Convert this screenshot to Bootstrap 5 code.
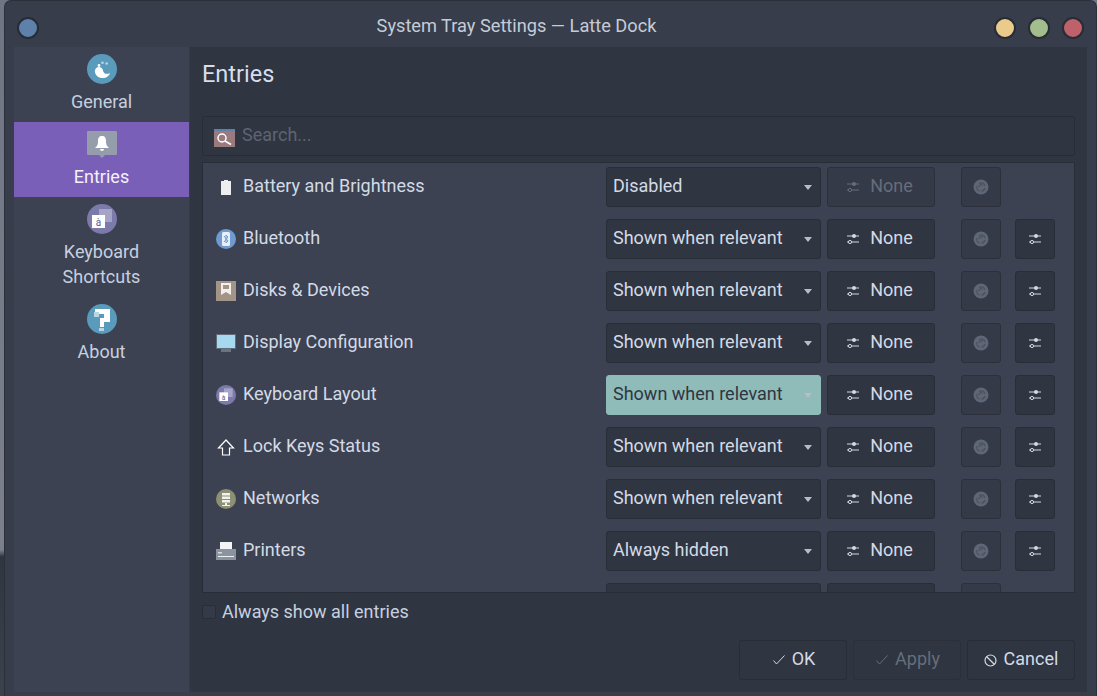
<!DOCTYPE html>
<html lang="en">
<head>
    <meta charset="UTF-8">
    <title>System Tray Settings — Latte Dock</title>
    <link href="https://cdn.jsdelivr.net/npm/bootstrap@5.3.0/dist/css/bootstrap.min.css" rel="stylesheet">
    <style>
        html, body { height: 100%; }
        body {
            margin: 0;
            overflow: hidden;
            font-family: Roboto, "Liberation Sans", sans-serif;
            font-size: 18px;
            color: #d3dae6;
            background: linear-gradient(#6f7583 0, #7b808c 79%, #30363f 80%, #3c424c 100%);
            padding: 1px 1px 0 5px;
        }
        .tray-window {
            height: 695px;
            background: #373d4a;
            border-radius: 6px 6px 0 0;
            box-shadow: 0 0 0 1px #2b303a;
        }
        .title-bar { height: 46px; padding: 4px 12px 0 12px; }
        .title-text { font-size: 18.2px; color: #c5ccd8; }
        .win-dot {
            width: 22px;
            height: 22px;
            margin-top: 4px;
            border-radius: 50%;
            border: 2px solid #272c36;
        }
        .win-dots { gap: 12px; }
        .dot-blue { background: #5e81ac; }
        .dot-yellow { background: #ebcb8b; }
        .dot-green { background: #a3be8c; }
        .dot-red { background: #bf616a; }
        .window-body { margin: 0 9px; height: 645px; background: #2f3541; }
        .side-pane { width: 176px; background: #3c4251; border-right: 1px solid #353b48; }
        .side-item { height: 75px; line-height: 25px; padding-top: 5px; color: #c6d0e0; }
        .side-item.is-tall { height: 100px; }
        .side-item.is-active { background: #7a5fb8; color: #f4f1fb; }
        .side-item svg { display: block; margin: 2px auto 5px; }
        .main-pane { padding: 0 12px; min-width: 0; }
        .pane-title { height: 69px; margin: 0; padding: 12px 0 0; font-size: 23.5px; font-weight: 400; line-height: 30px; color: #d8dee9; }
        .search-box { height: 40px; border: 1px solid #282d37; border-radius: 3px; background: #2f3541; padding-left: 11px; gap: 7px; color: #5d6472; }
        .search-box svg { margin-top: 3px; }
        .search-hint { font-size: 18px; padding-bottom: 4px; }
        .entry-list { height: 431px; margin-top: 6px; overflow: hidden; background: #3c4251; border: 1px solid #282d37; padding-top: 4px; }
        .entry-row { height: 52px; padding-bottom: 12px; flex: none; }
        .entry-name { width: 403px; padding-left: 13px; gap: 7px; }
        .entry-name svg { flex: none; }
        .entry-label { padding-bottom: 4px; }
        .tray-select.form-select {
            width: 215px;
            height: 40px;
            padding: 0 0 4px 6px;
            font-size: 18px;
            border: 1px solid #282d37;
            border-radius: 3px;
            color: #d3dae6;
            background-color: #2f3541;
            background-image: none;
        }
        .tray-select-wrap { position: relative; }
        .tray-select-wrap::after {
            content: "";
            position: absolute;
            right: 9px;
            top: 18px;
            border-left: 4px solid transparent;
            border-right: 4px solid transparent;
            border-top: 5px solid #b9bdc4;
            pointer-events: none;
        }
        .tray-select.is-hover.form-select { background-color: #8fbcb8; border-color: #8fbcb8; color: #2f3541; }
        .tray-btn.btn {
            height: 40px;
            padding: 0 0 4px;
            font-size: 18px;
            border: 1px solid #282d37;
            border-radius: 3px;
            color: #d3dae6;
            background: #2f3541;
            gap: 11px;
        }
        .tray-btn svg { margin-top: 4px; }
        .tray-btn.btn:disabled { color: #666d7b; background: #343a47; border-color: #2b303a; opacity: 1; }
        .tray-btn.key-btn.btn { width: 108px; margin-left: 6px; padding-right: 2px; }
        .dim-btn { width: 40px; margin-left: 26px; }
        .cfg-btn { width: 40px; margin-left: 14px; }
        .show-all { height: 38px; gap: 6px; color: #c6d0e0; }
        .show-all span:last-child { padding-bottom: 2px; }
        .fake-check { width: 14px; height: 14px; border: 1px solid #282d37; border-radius: 2px; background: #343a47; }
        .foot-row { margin-top: 9px; gap: 6px; }
        .foot-row .tray-btn.btn { width: 108px; background: #2f3541; gap: 7px; }
        .foot-row .tray-btn.btn:not(:last-child) { padding-left: 2px; }
        .foot-row .tray-btn.btn:disabled { background: #2f3541; }
    </style>
</head>
<body>

<svg class="d-none">
    <symbol id="sliders" viewBox="0 0 12 10">
        <path d="M0 2h12M0 8h12" stroke="currentColor" fill="none"/>
        <circle cx="7" cy="2" r="2" fill="currentColor"/>
        <circle cx="3" cy="8" r="1.6" fill="#2f3541" stroke="currentColor"/>
    </symbol>
    <symbol id="swirl" viewBox="0 0 16 16">
        <circle cx="8" cy="8" r="7.5" fill="#5f6776"/>
        <path d="M6 4.500a4 4 0 0 1 6 2.500M4 7a4 4 0 0 0 2.500 5M12 9a4 4 0 0 1-3.500 3M6 8a2 2 0 0 1 3.500-1.500" fill="none" stroke="#4b5260" stroke-width="1.300"/>
    </symbol>
    <symbol id="kbd" viewBox="0 0 30 30">
        <circle cx="15" cy="15" r="15" fill="#7c79ab"/>
        <rect x="12" y="5" width="13" height="13" fill="#a5a3c6"/>
        <rect x="5" y="11" width="13" height="13" fill="#fff"/>
        <text x="11.500" y="22" font-size="10" text-anchor="middle" font-family="Roboto, sans-serif" fill="#5f5c8c">à</text>
    </symbol>
</svg>

<div class="tray-window d-flex flex-column">
    <div class="title-bar d-flex align-items-center">
        <span class="win-dot dot-blue"></span>
        <div class="title-text flex-grow-1 text-center">System Tray Settings — Latte Dock</div>
        <div class="win-dots d-flex">
            <span class="win-dot dot-yellow"></span>
            <span class="win-dot dot-green"></span>
            <span class="win-dot dot-red"></span>
        </div>
    </div>

    <div class="window-body d-flex">
        <div class="side-pane flex-shrink-0 text-center">
            <div class="side-item">
                <svg width="30" height="30" viewBox="0 0 30 30">
                    <circle cx="15" cy="15" r="15" fill="#5a9abb"/>
                    <path d="M12 13C8.500 13 7.500 16.500 8 18.500 9 22.500 13 24.500 17 24 20 23.600 22.500 21.500 23 19 20.500 20.500 17.500 20 16.500 18 16 16.500 16 13.500 12 13z" fill="#fff"/>
                    <circle cx="12" cy="11.500" r="1.400" fill="#fff"/>
                    <circle cx="15.500" cy="8.700" r="1.300" fill="#b9d6e5"/>
                    <circle cx="19.700" cy="9.500" r="1.300" fill="#b9d6e5"/>
                </svg>
                General
            </div>
            <div class="side-item is-active">
                <svg width="30" height="30" viewBox="0 0 30 30">
                    <path d="M1 2h28a1 1 0 0 1 1 1v22a1 1 0 0 1-1 1h-11l-3 3-3-3H1a1 1 0 0 1-1-1V3a1 1 0 0 1 1-1z" fill="#959cab"/>
                    <path d="M15 7c-3 0-4 2-4 5 0 4-1 5-3 7h14c-2-2-3-3-3-7 0-3-1-5-4-5z M13 20h4a2 2 0 0 1-4 0z" fill="#fff"/>
                </svg>
                Entries
            </div>
            <div class="side-item is-tall">
                <svg width="30" height="30"><use href="#kbd"/></svg>
                Keyboard<br>Shortcuts
            </div>
            <div class="side-item">
                <svg width="30" height="30" viewBox="0 0 30 30">
                    <circle cx="15" cy="15" r="15" fill="#5a9abb"/>
                    <path d="M8 5h15v13h-6v5h-4v-9h4V10H8z" fill="#fff"/>
                    <rect x="7" y="8" width="5" height="5" fill="#b9d6e5"/>
                    <rect x="12" y="24" width="5" height="3" fill="#b9d6e5"/>
                </svg>
                About
            </div>
        </div>

        <div class="main-pane flex-grow-1">
            <h1 class="pane-title">Entries</h1>
            <div class="search-box d-flex align-items-center">
                <svg width="21" height="18" viewBox="0 0 21 18">
                    <rect y="1" width="21" height="17" fill="#9a7a7c"/>
                    <rect y="0" width="21" height="2" fill="#5e81ac"/>
                    <circle cx="8" cy="9" r="4" fill="#9a7a7c" stroke="#fff" stroke-width="1.500"/>
                    <path d="M11 12l6 3.500" stroke="#fff" stroke-width="1.500"/>
                </svg>
                <span class="search-hint">Search...</span>
            </div>

            <div class="entry-list d-flex flex-column">
                <div class="entry-row d-flex align-items-start">
                    <div class="entry-name d-flex align-items-center">
                        <svg width="20" height="40" viewBox="0 0 20 40"><path d="M5 14h3v-1h4v1h3v14H5z" fill="#eceef0"/></svg>
                        <span class="entry-label">Battery and Brightness</span>
                    </div>
                    <div class="tray-select-wrap"><select class="form-select tray-select"><option>Disabled</option></select></div>
                    <button class="btn tray-btn key-btn d-flex align-items-center justify-content-center" disabled><svg width="12" height="10"><use href="#sliders"/></svg>None</button>
                    <button class="btn tray-btn dim-btn d-flex align-items-center justify-content-center" disabled><svg width="16" height="16"><use href="#swirl"/></svg></button>
                </div>
                <div class="entry-row d-flex align-items-start">
                    <div class="entry-name d-flex align-items-center">
                        <svg width="20" height="40" viewBox="0 0 20 40"><circle cx="10" cy="20" r="10" fill="#6f9bd1"/><rect x="6" y="13" width="8" height="14" rx="1.500" fill="#e8eff8"/><path d="M8 17l4 5-2 2v-8l2 2-4 5" fill="none" stroke="#6f9bd1"/></svg>
                        <span class="entry-label">Bluetooth</span>
                    </div>
                    <div class="tray-select-wrap"><select class="form-select tray-select"><option>Shown when relevant</option></select></div>
                    <button class="btn tray-btn key-btn d-flex align-items-center justify-content-center"><svg width="12" height="10"><use href="#sliders"/></svg>None</button>
                    <button class="btn tray-btn dim-btn d-flex align-items-center justify-content-center" disabled><svg width="16" height="16"><use href="#swirl"/></svg></button>
                    <button class="btn tray-btn cfg-btn d-flex align-items-center justify-content-center"><svg width="12" height="10"><use href="#sliders"/></svg></button>
                </div>
                <div class="entry-row d-flex align-items-start">
                    <div class="entry-name d-flex align-items-center">
                        <svg width="20" height="40" viewBox="0 0 20 40"><rect y="10" width="20" height="20" fill="#a39488"/><path d="M5 12h10v12l-5-3-5 3z" fill="#f2efec"/><rect x="7" y="14" width="6" height="4" fill="#a39488"/></svg>
                        <span class="entry-label">Disks &amp; Devices</span>
                    </div>
                    <div class="tray-select-wrap"><select class="form-select tray-select"><option>Shown when relevant</option></select></div>
                    <button class="btn tray-btn key-btn d-flex align-items-center justify-content-center"><svg width="12" height="10"><use href="#sliders"/></svg>None</button>
                    <button class="btn tray-btn dim-btn d-flex align-items-center justify-content-center" disabled><svg width="16" height="16"><use href="#swirl"/></svg></button>
                    <button class="btn tray-btn cfg-btn d-flex align-items-center justify-content-center"><svg width="12" height="10"><use href="#sliders"/></svg></button>
                </div>
                <div class="entry-row d-flex align-items-start">
                    <div class="entry-name d-flex align-items-center">
                        <svg width="20" height="40" viewBox="0 0 20 40"><rect y="11" width="20" height="15" fill="#5f6b78"/><rect x="1" y="12" width="18" height="13" fill="#a6d8f0"/><rect x="5" y="26" width="10" height="3" fill="#6b7280"/></svg>
                        <span class="entry-label">Display Configuration</span>
                    </div>
                    <div class="tray-select-wrap"><select class="form-select tray-select"><option>Shown when relevant</option></select></div>
                    <button class="btn tray-btn key-btn d-flex align-items-center justify-content-center"><svg width="12" height="10"><use href="#sliders"/></svg>None</button>
                    <button class="btn tray-btn dim-btn d-flex align-items-center justify-content-center" disabled><svg width="16" height="16"><use href="#swirl"/></svg></button>
                    <button class="btn tray-btn cfg-btn d-flex align-items-center justify-content-center"><svg width="12" height="10"><use href="#sliders"/></svg></button>
                </div>
                <div class="entry-row d-flex align-items-start">
                    <div class="entry-name d-flex align-items-center">
                        <svg width="20" height="40" viewBox="0 -15 30 60"><use href="#kbd" width="30" height="30"/></svg>
                        <span class="entry-label">Keyboard Layout</span>
                    </div>
                    <div class="tray-select-wrap"><select class="form-select tray-select is-hover"><option>Shown when relevant</option></select></div>
                    <button class="btn tray-btn key-btn d-flex align-items-center justify-content-center"><svg width="12" height="10"><use href="#sliders"/></svg>None</button>
                    <button class="btn tray-btn dim-btn d-flex align-items-center justify-content-center" disabled><svg width="16" height="16"><use href="#swirl"/></svg></button>
                    <button class="btn tray-btn cfg-btn d-flex align-items-center justify-content-center"><svg width="12" height="10"><use href="#sliders"/></svg></button>
                </div>
                <div class="entry-row d-flex align-items-start">
                    <div class="entry-name d-flex align-items-center">
                        <svg width="20" height="40" viewBox="0 0 20 40"><path d="M10 13l7.500 8H13.500v7h-7v-7H2.500z" fill="none" stroke="#fff" stroke-width="1.200"/></svg>
                        <span class="entry-label">Lock Keys Status</span>
                    </div>
                    <div class="tray-select-wrap"><select class="form-select tray-select"><option>Shown when relevant</option></select></div>
                    <button class="btn tray-btn key-btn d-flex align-items-center justify-content-center"><svg width="12" height="10"><use href="#sliders"/></svg>None</button>
                    <button class="btn tray-btn dim-btn d-flex align-items-center justify-content-center" disabled><svg width="16" height="16"><use href="#swirl"/></svg></button>
                    <button class="btn tray-btn cfg-btn d-flex align-items-center justify-content-center"><svg width="12" height="10"><use href="#sliders"/></svg></button>
                </div>
                <div class="entry-row d-flex align-items-start">
                    <div class="entry-name d-flex align-items-center">
                        <svg width="20" height="40" viewBox="0 0 20 40"><circle cx="10" cy="20" r="10" fill="#8c9074"/><path d="M6 14h8v2.500H6zM6 17.500h8V20H6zM6 21h8v2.500H6zM9 24h2v2h3v1H6v-1h3z" fill="#f2f2ec"/></svg>
                        <span class="entry-label">Networks</span>
                    </div>
                    <div class="tray-select-wrap"><select class="form-select tray-select"><option>Shown when relevant</option></select></div>
                    <button class="btn tray-btn key-btn d-flex align-items-center justify-content-center"><svg width="12" height="10"><use href="#sliders"/></svg>None</button>
                    <button class="btn tray-btn dim-btn d-flex align-items-center justify-content-center" disabled><svg width="16" height="16"><use href="#swirl"/></svg></button>
                    <button class="btn tray-btn cfg-btn d-flex align-items-center justify-content-center"><svg width="12" height="10"><use href="#sliders"/></svg></button>
                </div>
                <div class="entry-row d-flex align-items-start">
                    <div class="entry-name d-flex align-items-center">
                        <svg width="20" height="40" viewBox="0 0 20 40"><rect x="4" y="11" width="12" height="9" fill="#f2f4f6"/><rect y="18" width="20" height="11" fill="#8a949e"/><rect x="2" y="25" width="16" height="1" fill="#eef0f2"/><rect x="2" y="21" width="4" height="1.500" fill="#d5d9de"/></svg>
                        <span class="entry-label">Printers</span>
                    </div>
                    <div class="tray-select-wrap"><select class="form-select tray-select"><option>Always hidden</option></select></div>
                    <button class="btn tray-btn key-btn d-flex align-items-center justify-content-center"><svg width="12" height="10"><use href="#sliders"/></svg>None</button>
                    <button class="btn tray-btn dim-btn d-flex align-items-center justify-content-center" disabled><svg width="16" height="16"><use href="#swirl"/></svg></button>
                    <button class="btn tray-btn cfg-btn d-flex align-items-center justify-content-center"><svg width="12" height="10"><use href="#sliders"/></svg></button>
                </div>
                <div class="entry-row d-flex align-items-start">
                    <div class="entry-name"></div>
                    <div class="tray-select-wrap"><select class="form-select tray-select"><option></option></select></div>
                    <button class="btn tray-btn key-btn"></button>
                    <button class="btn tray-btn dim-btn" disabled></button>
                </div>
            </div>

            <div class="show-all d-flex align-items-center">
                <span class="fake-check"></span>
                <span>Always show all entries</span>
            </div>

            <div class="foot-row d-flex justify-content-end">
                <button class="btn tray-btn d-flex align-items-center justify-content-center">
                    <svg width="12" height="10" viewBox="0 0 12 10"><path d="M.5 5.500l3 3.500 8-8.500" fill="none" stroke="currentColor"/></svg>OK
                </button>
                <button class="btn tray-btn d-flex align-items-center justify-content-center" disabled>
                    <svg width="12" height="10" viewBox="0 0 12 10"><path d="M.5 5.500l3 3.500 8-8.500" fill="none" stroke="currentColor"/></svg>Apply
                </button>
                <button class="btn tray-btn d-flex align-items-center justify-content-center">
                    <svg width="13" height="13" viewBox="0 0 13 13"><circle cx="6.500" cy="6.500" r="5.500" fill="none" stroke="currentColor" stroke-width="1.200"/><path d="M2.500 2.500l8 8" stroke="currentColor" stroke-width="1.200"/></svg>Cancel
                </button>
            </div>
        </div>
    </div>
</div>

</body>
</html>
